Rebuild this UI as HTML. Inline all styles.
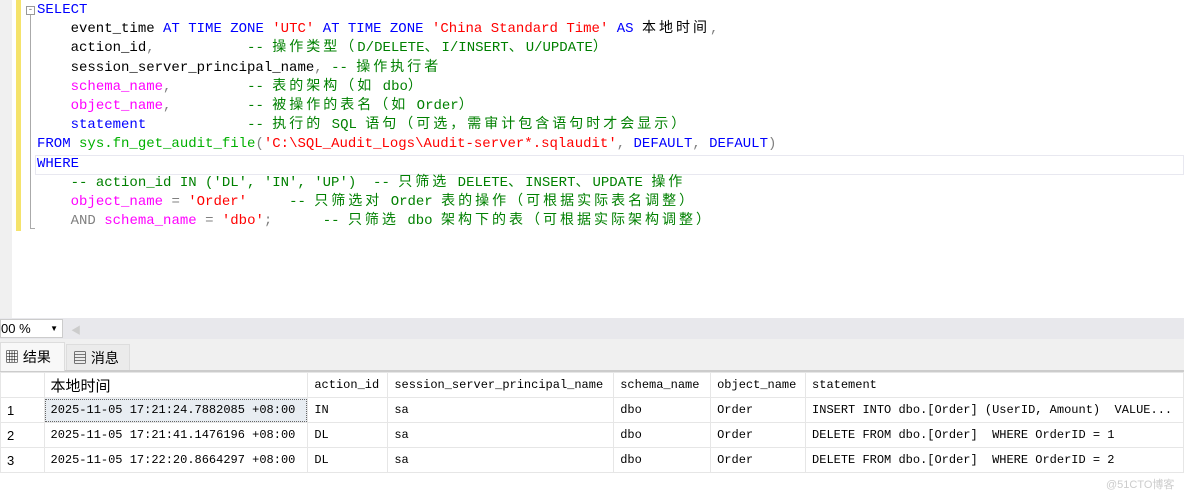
<!DOCTYPE html>
<html><head><meta charset="utf-8"><style>
*{margin:0;padding:0;box-sizing:border-box}
body{width:1184px;height:497px;overflow:hidden;background:#fff;position:relative;font-family:"Liberation Mono","Noto Sans CJK SC",monospace}
.abs{position:absolute}
.code{position:absolute;left:37px;top:1px;font-size:14px;line-height:19.2px;white-space:pre;color:#000;font-family:"Liberation Mono","Noto Sans CJK SC",monospace}
.code i{font-style:normal;letter-spacing:3px}
.k{color:#0000ff}.s{color:#ff0000}.c{color:#008000}.m{color:#ff00ff}.f{color:#00b000}.g{color:#808080}
table{border-collapse:collapse;position:absolute;left:0;top:372px;font-family:"Liberation Mono","Noto Sans CJK SC",monospace;font-size:12px}
td{border:1px solid #e6e6e6;height:25px;padding:0 6px;white-space:pre}
td.n{font-family:"Liberation Sans",sans-serif;font-size:13px}
</style></head><body>
<div class="abs" style="left:0;top:0;width:12px;height:318px;background:#f0f0f0"></div>
<div class="abs" style="left:16px;top:0;width:5px;height:231px;background:#f5e36b"></div>
<div class="abs" style="left:26px;top:6px;width:9px;height:9px;border:1px solid #999;font-size:9px;line-height:6px;text-align:center;color:#666">-</div>
<div class="abs" style="left:30px;top:15px;width:1px;height:214px;background:#aaa"></div>
<div class="abs" style="left:30px;top:228px;width:5px;height:1px;background:#aaa"></div>
<div class="abs" style="left:35px;top:155px;width:1149px;height:20px;border:1px solid #e8e8f0"></div>
<div class="code"><span class="k">SELECT</span>
    event_time <span class="k">AT TIME ZONE</span> <span class="s">'UTC'</span> <span class="k">AT TIME ZONE</span> <span class="s">'China Standard Time'</span> <span class="k">AS</span> <i>本地时间</i><span class="g">,</span>
    action_id<span class="g">,</span>           <span class="c">-- <i>操作类型（</i>D/DELETE<i>、</i>I/INSERT<i>、</i>U/UPDATE<i>）</i></span>
    session_server_principal_name<span class="g">,</span> <span class="c">-- <i>操作执行者</i></span>
    <span class="m">schema_name</span><span class="g">,</span>         <span class="c">-- <i>表的架构（如</i> dbo<i>）</i></span>
    <span class="m">object_name</span><span class="g">,</span>         <span class="c">-- <i>被操作的表名（如</i> Order<i>）</i></span>
    <span class="k">statement</span>            <span class="c">-- <i>执行的</i> SQL <i>语句（可选，需审计包含语句时才会显示）</i></span>
<span class="k">FROM</span> <span class="f">sys.fn_get_audit_file</span><span class="g">(</span><span class="s">'C:\SQL_Audit_Logs\Audit-server*.sqlaudit'</span><span class="g">,</span> <span class="k">DEFAULT</span><span class="g">,</span> <span class="k">DEFAULT</span><span class="g">)</span>
<span class="k">WHERE</span>
    <span class="c">-- action_id IN ('DL', 'IN', 'UP')  -- <i>只筛选</i> DELETE<i>、</i>INSERT<i>、</i>UPDATE <i>操作</i></span>
    <span class="m">object_name</span> <span class="g">=</span> <span class="s">'Order'</span>     <span class="c">-- <i>只筛选对</i> Order <i>表的操作（可根据实际表名调整）</i></span>
    <span class="g">AND</span> <span class="m">schema_name</span> <span class="g">=</span> <span class="s">'dbo'</span><span class="g">;</span>      <span class="c">-- <i>只筛选</i> dbo <i>架构下的表（可根据实际架构调整）</i></span></div>
<div class="abs" style="left:0;top:318px;width:1184px;height:21px;background:#e8e8ec"></div>
<div class="abs" style="left:0;top:319px;width:63px;height:19px;background:#fff;border:1px solid #ccc;font-family:'Liberation Sans',sans-serif;font-size:13px;line-height:17px">00 %<span style="position:absolute;right:4px;top:0;font-size:8px">▼</span></div>
<div class="abs" style="left:71px;top:322px;color:#ccc;font-size:10px">◀</div>
<div class="abs" style="left:0;top:339px;width:1184px;height:33px;background:#f0f0f0;border-bottom:2px solid #ccc"></div>
<div class="abs" style="left:0;top:342px;width:65px;height:29px;background:#f8f8f8;border:1px solid #ddd;border-bottom:none;font-family:'Liberation Sans','Noto Sans CJK SC',sans-serif;font-size:14px;line-height:28px;padding-left:4px">▦ 结果</div>
<div class="abs" style="left:66px;top:344px;width:64px;height:26px;background:#ebebeb;border:1px solid #ddd;border-bottom:none;font-family:'Liberation Sans','Noto Sans CJK SC',sans-serif;font-size:14px;line-height:26px;padding-left:6px">▤ 消息</div>
<table>
<tr><td style="width:44px"></td><td style="width:264px;font-family:'Liberation Sans','Noto Sans CJK SC',sans-serif;font-size:15px">本地时间</td><td style="width:80px">action_id</td><td style="width:226px">session_server_principal_name</td><td style="width:97px">schema_name</td><td style="width:95px">object_name</td><td style="width:378px">statement</td></tr>
<tr><td class="n">1</td><td style="background:#e8edf2;outline:1px dotted #666;outline-offset:-2px">2025-11-05 17:21:24.7882085 +08:00</td><td>IN</td><td>sa</td><td>dbo</td><td>Order</td><td>INSERT INTO dbo.[Order] (UserID, Amount)  VALUE...</td></tr>
<tr><td class="n">2</td><td>2025-11-05 17:21:41.1476196 +08:00</td><td>DL</td><td>sa</td><td>dbo</td><td>Order</td><td>DELETE FROM dbo.[Order]  WHERE OrderID = 1</td></tr>
<tr><td class="n">3</td><td>2025-11-05 17:22:20.8664297 +08:00</td><td>DL</td><td>sa</td><td>dbo</td><td>Order</td><td>DELETE FROM dbo.[Order]  WHERE OrderID = 2</td></tr>
</table>
<div class="abs" style="left:1106px;top:476px;font-family:'Liberation Sans','Noto Sans CJK SC',sans-serif;font-size:11px;color:#ccc">@51CTO博客</div>
</body></html>
